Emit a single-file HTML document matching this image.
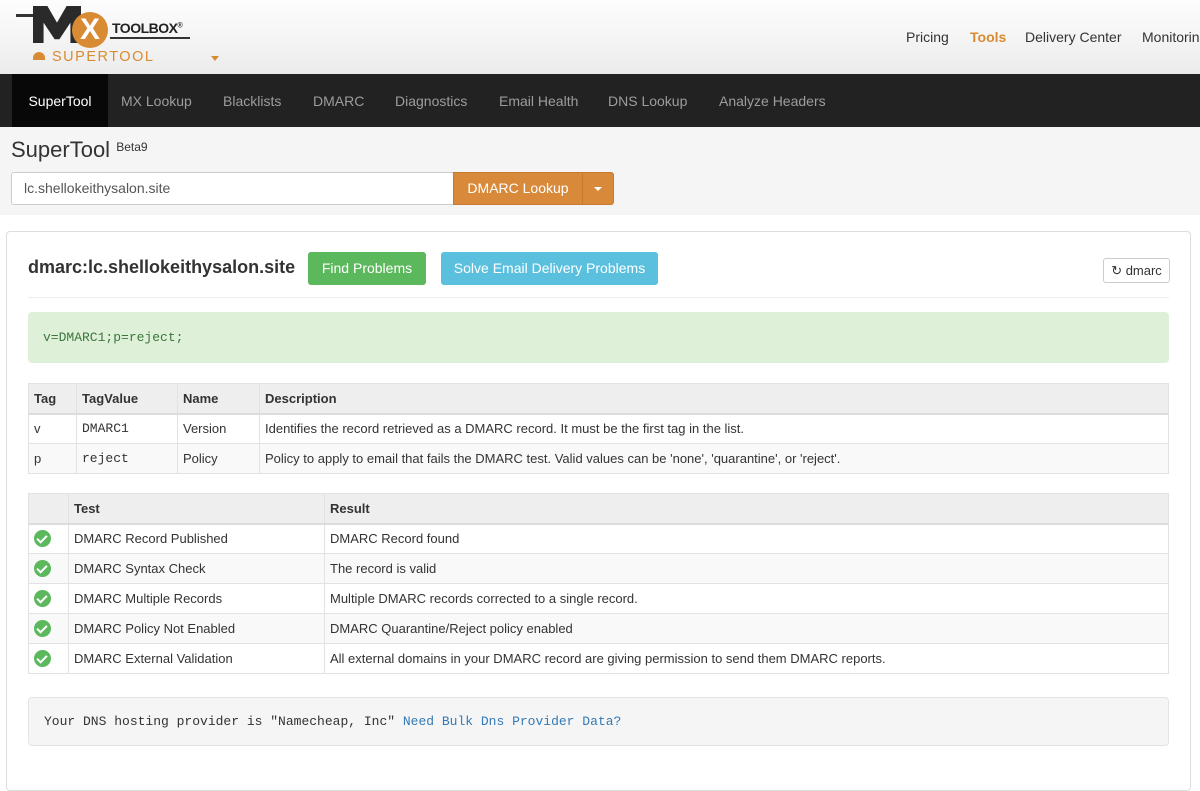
<!DOCTYPE html>
<html><head><meta charset="utf-8"><style>
*{box-sizing:border-box;margin:0;padding:0}
body{width:1200px;height:756px;overflow:hidden;font-family:"Liberation Sans",sans-serif;font-size:14px;color:#333;background:#fff;position:relative}
.abs{position:absolute}
.hdr{left:0;top:0;width:1200px;height:74px;background:linear-gradient(#fdfdfd,#ececec)}
.topnav{font-size:14px;color:#333}
.nav{left:0;top:74px;width:1200px;height:53px;background:#222}
.nav span{position:absolute;top:0;height:53px;line-height:54px;color:#9d9d9d;font-size:14px}
.sec{left:0;top:127px;width:1200px;height:88px;background:#f5f5f5}
table{border-collapse:collapse;position:absolute;left:28px;width:1141px;font-size:13px}
td,th{border:1px solid #e2e2e2;height:30px;padding:0 5px;text-align:left;vertical-align:middle}
th{background:#eee;font-weight:bold;border-bottom:2px solid #ddd}
tr:nth-child(odd) td{background:#f9f9f9}
.mono{font-family:"Liberation Mono",monospace;font-size:13px}
.ok{display:inline-block;width:17px;height:17px;border-radius:50%;background:#5cb85c;position:relative;vertical-align:middle}
.ok:after{content:"";position:absolute;left:5px;top:3px;width:4px;height:8px;border:solid #fff;border-width:0 2.5px 2.5px 0;transform:rotate(45deg)}
</style></head><body>
<div class="abs hdr"></div>
<div class="abs" style="left:16px;top:14px;width:18px;height:3px;background:#333"></div>
<div class="abs" style="left:33px;top:6px;width:48px;height:37px;background:#2a2a2a;clip-path:polygon(0 0,30% 0,50% 45%,70% 0,100% 0,100% 100%,78% 100%,78% 45%,55% 90%,45% 90%,22% 45%,22% 100%,0 100%)"></div>
<div class="abs" style="left:72px;top:12px;width:36px;height:36px;border-radius:50%;background:#d98b33;color:#fff;font-weight:bold;font-size:30px;line-height:36px;text-align:center">X</div>
<div class="abs" style="left:112px;top:20px;font-weight:bold;font-size:14px;color:#222;letter-spacing:-0.5px">TOOLBOX<sup style="font-size:7px">®</sup></div>
<div class="abs" style="left:110px;top:37px;width:80px;height:2px;background:#333"></div>
<div class="abs" style="left:33px;top:52px;width:12px;height:8px;background:#d98b33;border-radius:6px 6px 0 0"></div>
<div class="abs" style="left:52px;top:49px;font-size:14.5px;color:#d98b33;letter-spacing:1.5px">SUPERTOOL</div>
<div class="abs" style="left:211px;top:56px;width:0;height:0;border-left:4px solid transparent;border-right:4px solid transparent;border-top:5px solid #d98b33"></div>
<div class="abs topnav" style="left:906px;top:29px">Pricing</div>
<div class="abs topnav" style="left:970px;top:29px;color:#d98b33;font-weight:bold">Tools</div>
<div class="abs topnav" style="left:1025px;top:29px">Delivery Center</div>
<div class="abs topnav" style="left:1142px;top:29px">Monitoring</div>
<div class="abs nav">
<span style="left:12px;width:96px;background:#080808;color:#fff;text-align:center">SuperTool</span>
<span style="left:121px">MX Lookup</span><span style="left:223px">Blacklists</span><span style="left:313px">DMARC</span><span style="left:395px">Diagnostics</span><span style="left:499px">Email Health</span><span style="left:608px">DNS Lookup</span><span style="left:719px">Analyze Headers</span>
</div>
<div class="abs sec"></div>
<div class="abs" style="left:11px;top:137px;font-size:22px;color:#333">SuperTool <sup style="font-size:12px;vertical-align:6px">Beta9</sup></div>
<div class="abs" style="left:11px;top:172px;width:443px;height:33px;border:1px solid #ccc;background:#fff;border-radius:3px 0 0 3px;padding-left:12px;line-height:31px;font-size:14px;color:#555">lc.shellokeithysalon.site</div>
<div class="abs" style="left:453px;top:172px;width:130px;height:33px;background:#d9893a;border:1px solid #c57a30;color:#fff;line-height:31px;text-align:center;font-size:14px">DMARC Lookup</div>
<div class="abs" style="left:582px;top:172px;width:32px;height:33px;background:#d9893a;border:1px solid #c57a30;border-radius:0 3px 3px 0"><div style="margin:14px auto 0;width:0;height:0;border-left:4px solid transparent;border-right:4px solid transparent;border-top:4px solid #fff"></div></div>
<div class="abs" style="left:6px;top:231px;width:1185px;height:560px;border:1px solid #ddd;border-radius:4px"></div>
<div class="abs" style="left:28px;top:257px;font-size:18px;font-weight:bold;color:#333">dmarc:lc.shellokeithysalon.site</div>
<div class="abs" style="left:308px;top:252px;width:118px;height:33px;background:#5cb85c;border-radius:3px;color:#fff;line-height:33px;text-align:center">Find Problems</div>
<div class="abs" style="left:441px;top:252px;width:217px;height:33px;background:#5bc0de;border-radius:3px;color:#fff;line-height:33px;text-align:center">Solve Email Delivery Problems</div>
<div class="abs" style="left:1103px;top:258px;width:67px;height:25px;border:1px solid #ccc;border-radius:3px;line-height:23px;text-align:center;font-size:13px">↻ dmarc</div>
<div class="abs" style="left:28px;top:297px;width:1141px;height:1px;background:#eee"></div>
<div class="abs" style="left:28px;top:312px;width:1141px;height:51px;background:#dff0d8;border-radius:4px;padding-left:15px;line-height:51px;color:#3c763d;font-family:'Liberation Mono',monospace;font-size:13px">v=DMARC1;p=reject;</div>
<table style="top:383px">
<tr><th style="width:48px">Tag</th><th style="width:101px">TagValue</th><th style="width:82px">Name</th><th>Description</th></tr>
<tr><td>v</td><td class="mono">DMARC1</td><td>Version</td><td>Identifies the record retrieved as a DMARC record. It must be the first tag in the list.</td></tr>
<tr><td>p</td><td class="mono">reject</td><td>Policy</td><td>Policy to apply to email that fails the DMARC test. Valid values can be 'none', 'quarantine', or 'reject'.</td></tr>
</table>
<table style="top:493px">
<tr><th style="width:40px"></th><th style="width:256px">Test</th><th>Result</th></tr>
<tr><td><span class="ok"></span></td><td>DMARC Record Published</td><td>DMARC Record found</td></tr>
<tr><td><span class="ok"></span></td><td>DMARC Syntax Check</td><td>The record is valid</td></tr>
<tr><td><span class="ok"></span></td><td>DMARC Multiple Records</td><td>Multiple DMARC records corrected to a single record.</td></tr>
<tr><td><span class="ok"></span></td><td>DMARC Policy Not Enabled</td><td>DMARC Quarantine/Reject policy enabled</td></tr>
<tr><td><span class="ok"></span></td><td>DMARC External Validation</td><td>All external domains in your DMARC record are giving permission to send them DMARC reports.</td></tr>
</table>
<div class="abs" style="left:28px;top:697px;width:1141px;height:49px;background:#f5f5f5;border:1px solid #e3e3e3;border-radius:4px;padding-left:15px;line-height:47px;font-family:'Liberation Mono',monospace;font-size:13px;color:#333">Your DNS hosting provider is "Namecheap, Inc" <span style="color:#337ab7">Need Bulk Dns Provider Data?</span></div>
</body></html>
